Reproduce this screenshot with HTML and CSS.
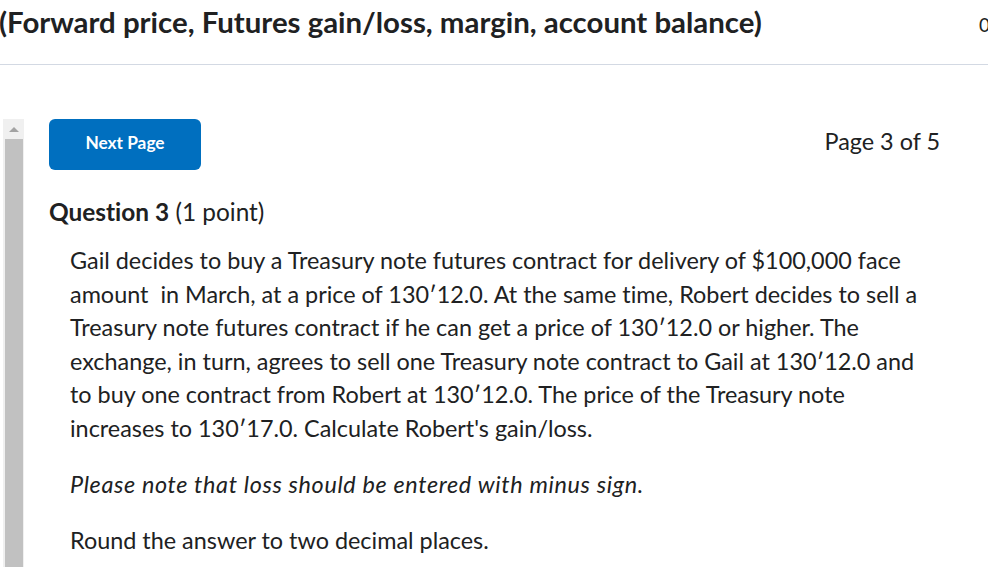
FILE: index.html
```html
<!DOCTYPE html>
<html>
<head>
<meta charset="utf-8">
<link rel="stylesheet" href="styles.css">
</head>
<body>
<header class="topbar">
  <h1 class="title">(Forward price, Futures gain/loss, margin, account balance)</h1>
  <span class="counter">0</span>
</header>
<div class="main">
  <div class="scrollbar">
    <div class="arrow"></div>
    <div class="thumb"></div>
  </div>
  <div class="content">
    <div class="nav-row">
      <button class="btn">Next Page</button>
      <span class="page-info">Page 3 of 5</span>
    </div>
    <h2 class="question"><strong>Question 3</strong> <span class="points">(1 point)</span></h2>
    <div class="question-body">
      <p>Gail decides to buy a Treasury note futures contract for delivery of $100,000 face amount&nbsp; in March, at a price of 130′12.0. At the same time, Robert decides to sell a Treasury note futures contract if he can get a price of 130′12.0 or higher. The exchange, in turn, agrees to sell one Treasury note contract to Gail at 130′12.0 and to buy one contract from Robert at 130′12.0. The price of the Treasury note increases to 130′17.0. Calculate Robert's gain/loss.</p>
      <p class="note"><em>Please note that loss should be entered with minus sign.</em></p>
      <p>Round the answer to two decimal places.</p>
    </div>
  </div>
</div>
</body>
</html>
```
FILE: styles.css
```css
html, body {
  margin: 0;
  padding: 0;
  background: #ffffff;
  overflow: hidden;
}
body {
  font-family: Lato, "Noto Sans", sans-serif;
  font-variant-ligatures: none;
  color: #202122;
  width: 988px;
  height: 567px;
}
.topbar {
  display: flex;
  justify-content: space-between;
  align-items: flex-start;
  height: 65px;
  border-bottom: 1px solid #d3d9e3;
  box-sizing: border-box;
  padding-top: 2px;
  margin-left: -1px;
}
.title {
  margin: 0;
  font-size: 29.4px;
  font-weight: 700;
  line-height: 40px;
  white-space: nowrap;
}
.counter {
  font-size: 19px;
  line-height: 46px;
  margin-right: -2px;
}
.main {
  display: flex;
  padding-top: 54px;
}
.scrollbar {
  margin-left: 3px;
  width: 21px;
  background: #f0f0f0;
  height: 460px;
  display: flex;
  flex-direction: column;
  align-items: center;
}
.arrow {
  margin-top: 8px;
  width: 0;
  height: 0;
  border-left: 5px solid transparent;
  border-right: 5px solid transparent;
  border-bottom: 5px solid #a3a3a3;
}
.thumb {
  margin-top: 7px;
  width: 18px;
  flex: 1;
  background: #c1c1c1;
}
.content {
  flex: 1;
  padding-left: 25px;
  padding-right: 48px;
}
.nav-row {
  display: flex;
  justify-content: space-between;
  align-items: flex-start;
}
.btn {
  width: 152px;
  height: 51px;
  background: #006fbf;
  color: #fff;
  border: none;
  border-radius: 6px;
  font-family: Lato, sans-serif;
  font-variant-ligatures: none;
  font-weight: 700;
  font-size: 17.3px;
  padding: 0 0 4px 0;
}
.page-info {
  font-size: 23.4px;
  line-height: 26px;
  margin-top: 9px;
}
.question {
  margin: 27px 0 0 0;
  font-size: 24.4px;
  font-weight: 400;
  line-height: 30px;
}
.question strong {
  font-weight: 700;
}
.question-body {
  padding-left: 21px;
  margin-top: 17px;
  font-size: 23.4px;
  line-height: 33.6px;
}
.question-body p {
  margin: 0 0 22.4px 0;
}
.note em {
  letter-spacing: 0.65px;
}
```
